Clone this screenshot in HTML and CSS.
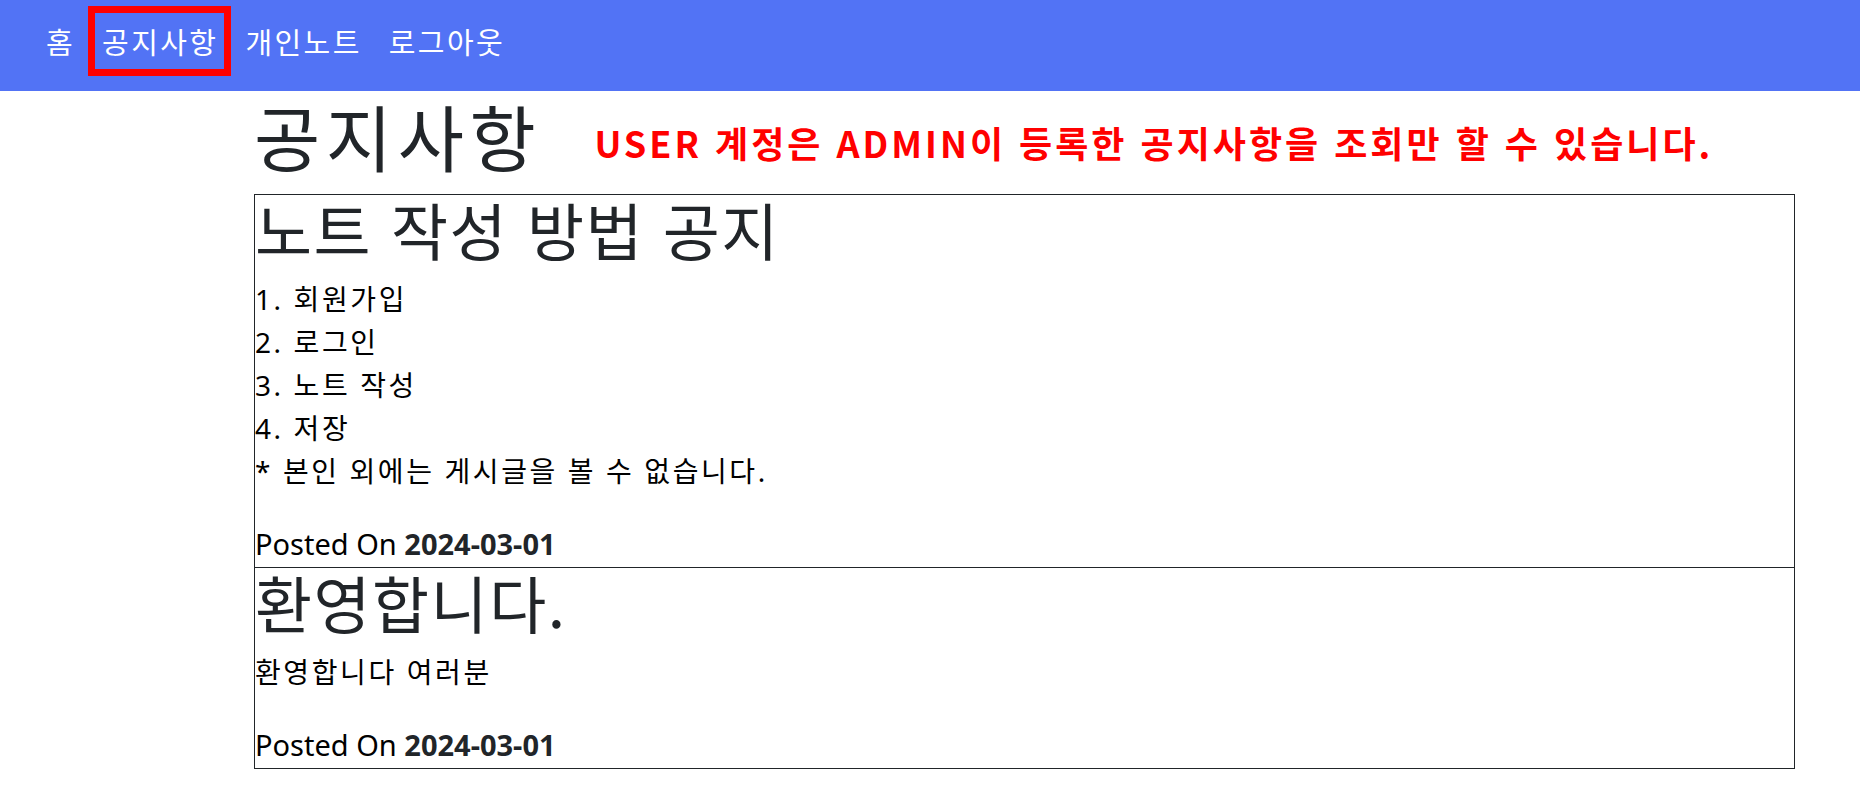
FILE: index.html
```html
<!DOCTYPE html>
<html lang="ko">
<head>
<meta charset="utf-8">
<title>공지사항</title>
<link rel="stylesheet" href="styles.css">
</head>
<body>
<nav class="navbar">
  <a class="nav-link" href="#">홈</a>
  <a class="nav-link active" href="#">공지사항</a>
  <a class="nav-link" href="#">개인노트</a>
  <a class="nav-link" href="#">로그아웃</a>
</nav>
<main class="container">
  <div class="page-head">
    <h1 class="page-title">공지사항</h1>
    <h3 class="notice-info">USER 계정은 ADMIN이 등록한 공지사항을 조회만 할 수 있습니다.</h3>
  </div>
  <article class="card">
    <h2 class="card-title">노트 작성 방법 공지</h2>
    <div class="card-body">
      <div class="line">1. 회원가입</div>
      <div class="line">2. 로그인</div>
      <div class="line">3. 노트 작성</div>
      <div class="line">4. 저장</div>
      <div class="line">* 본인 외에는 게시글을 볼 수 없습니다.</div>
    </div>
    <p class="posted">Posted On <b>2024-03-01</b></p>
  </article>
  <article class="card">
    <h2 class="card-title">환영합니다.</h2>
    <div class="card-body">
      <div class="line">환영합니다 여러분</div>
    </div>
    <p class="posted">Posted On <b>2024-03-01</b></p>
  </article>
</main>
</body>
</html>
```
FILE: styles.css
```css
* { box-sizing: border-box; }
body {
  margin: 0;
  font-family: "Noto Sans", "Noto Sans CJK KR", sans-serif;
  color: #212529;
  background: #fff;
}
.navbar {
  height: 91px;
  background: #5273f5;
  display: flex;
  align-items: flex-start;
  padding: 13px 0 0 39px;
  gap: 14px;
}
.nav-link {
  color: #fff;
  text-decoration: none;
  font-family: "Noto Sans CJK KR", sans-serif;
  font-size: 29px;
  letter-spacing: 2.4px;
  padding: 8px 6px 8px 7px;
  line-height: 40px;
}
.nav-link.active {
  outline: 7px solid #ff0000;
  outline-offset: 0;
}
.container {
  margin-left: 254px;
  width: 1541px;
}
.page-head {
  display: flex;
  align-items: baseline;
  gap: 53px;
  height: 103px;
}
.page-title {
  margin: 0;
  font-family: "Noto Sans CJK KR", sans-serif;
  font-weight: 400;
  font-size: 72px;
  letter-spacing: 5.6px;
  line-height: 88px;
}
.notice-info {
  margin: 0;
  position: relative;
  top: -8px;
  color: #ff0000;
  font-family: "Noto Sans CJK KR", sans-serif;
  font-weight: 700;
  font-size: 36px;
  letter-spacing: 3px;
}
.card {
  border: 1px solid #212529;
}
.card + .card {
  margin-top: -1px;
}
.card-title {
  margin: 0;
  padding-bottom: 15px;
  font-family: "Noto Sans CJK KR", sans-serif;
  font-weight: 400;
  font-size: 62px;
  letter-spacing: 1.5px;
  line-height: 68px;
}
.card-body {
  font-family: "Noto Sans", "Noto Sans CJK KR", sans-serif;
  font-size: 28px;
  letter-spacing: 2.6px;
  color: #000;
  margin-bottom: 31px;
}
.line {
  height: 43px;
  line-height: 43px;
  white-space: nowrap;
}
.posted {
  margin: 0;
  padding-bottom: 3px;
  font-size: 29px;
  line-height: 40px;
  color: #000;
}
.posted b { font-weight: 700; color: #212529; }
```
